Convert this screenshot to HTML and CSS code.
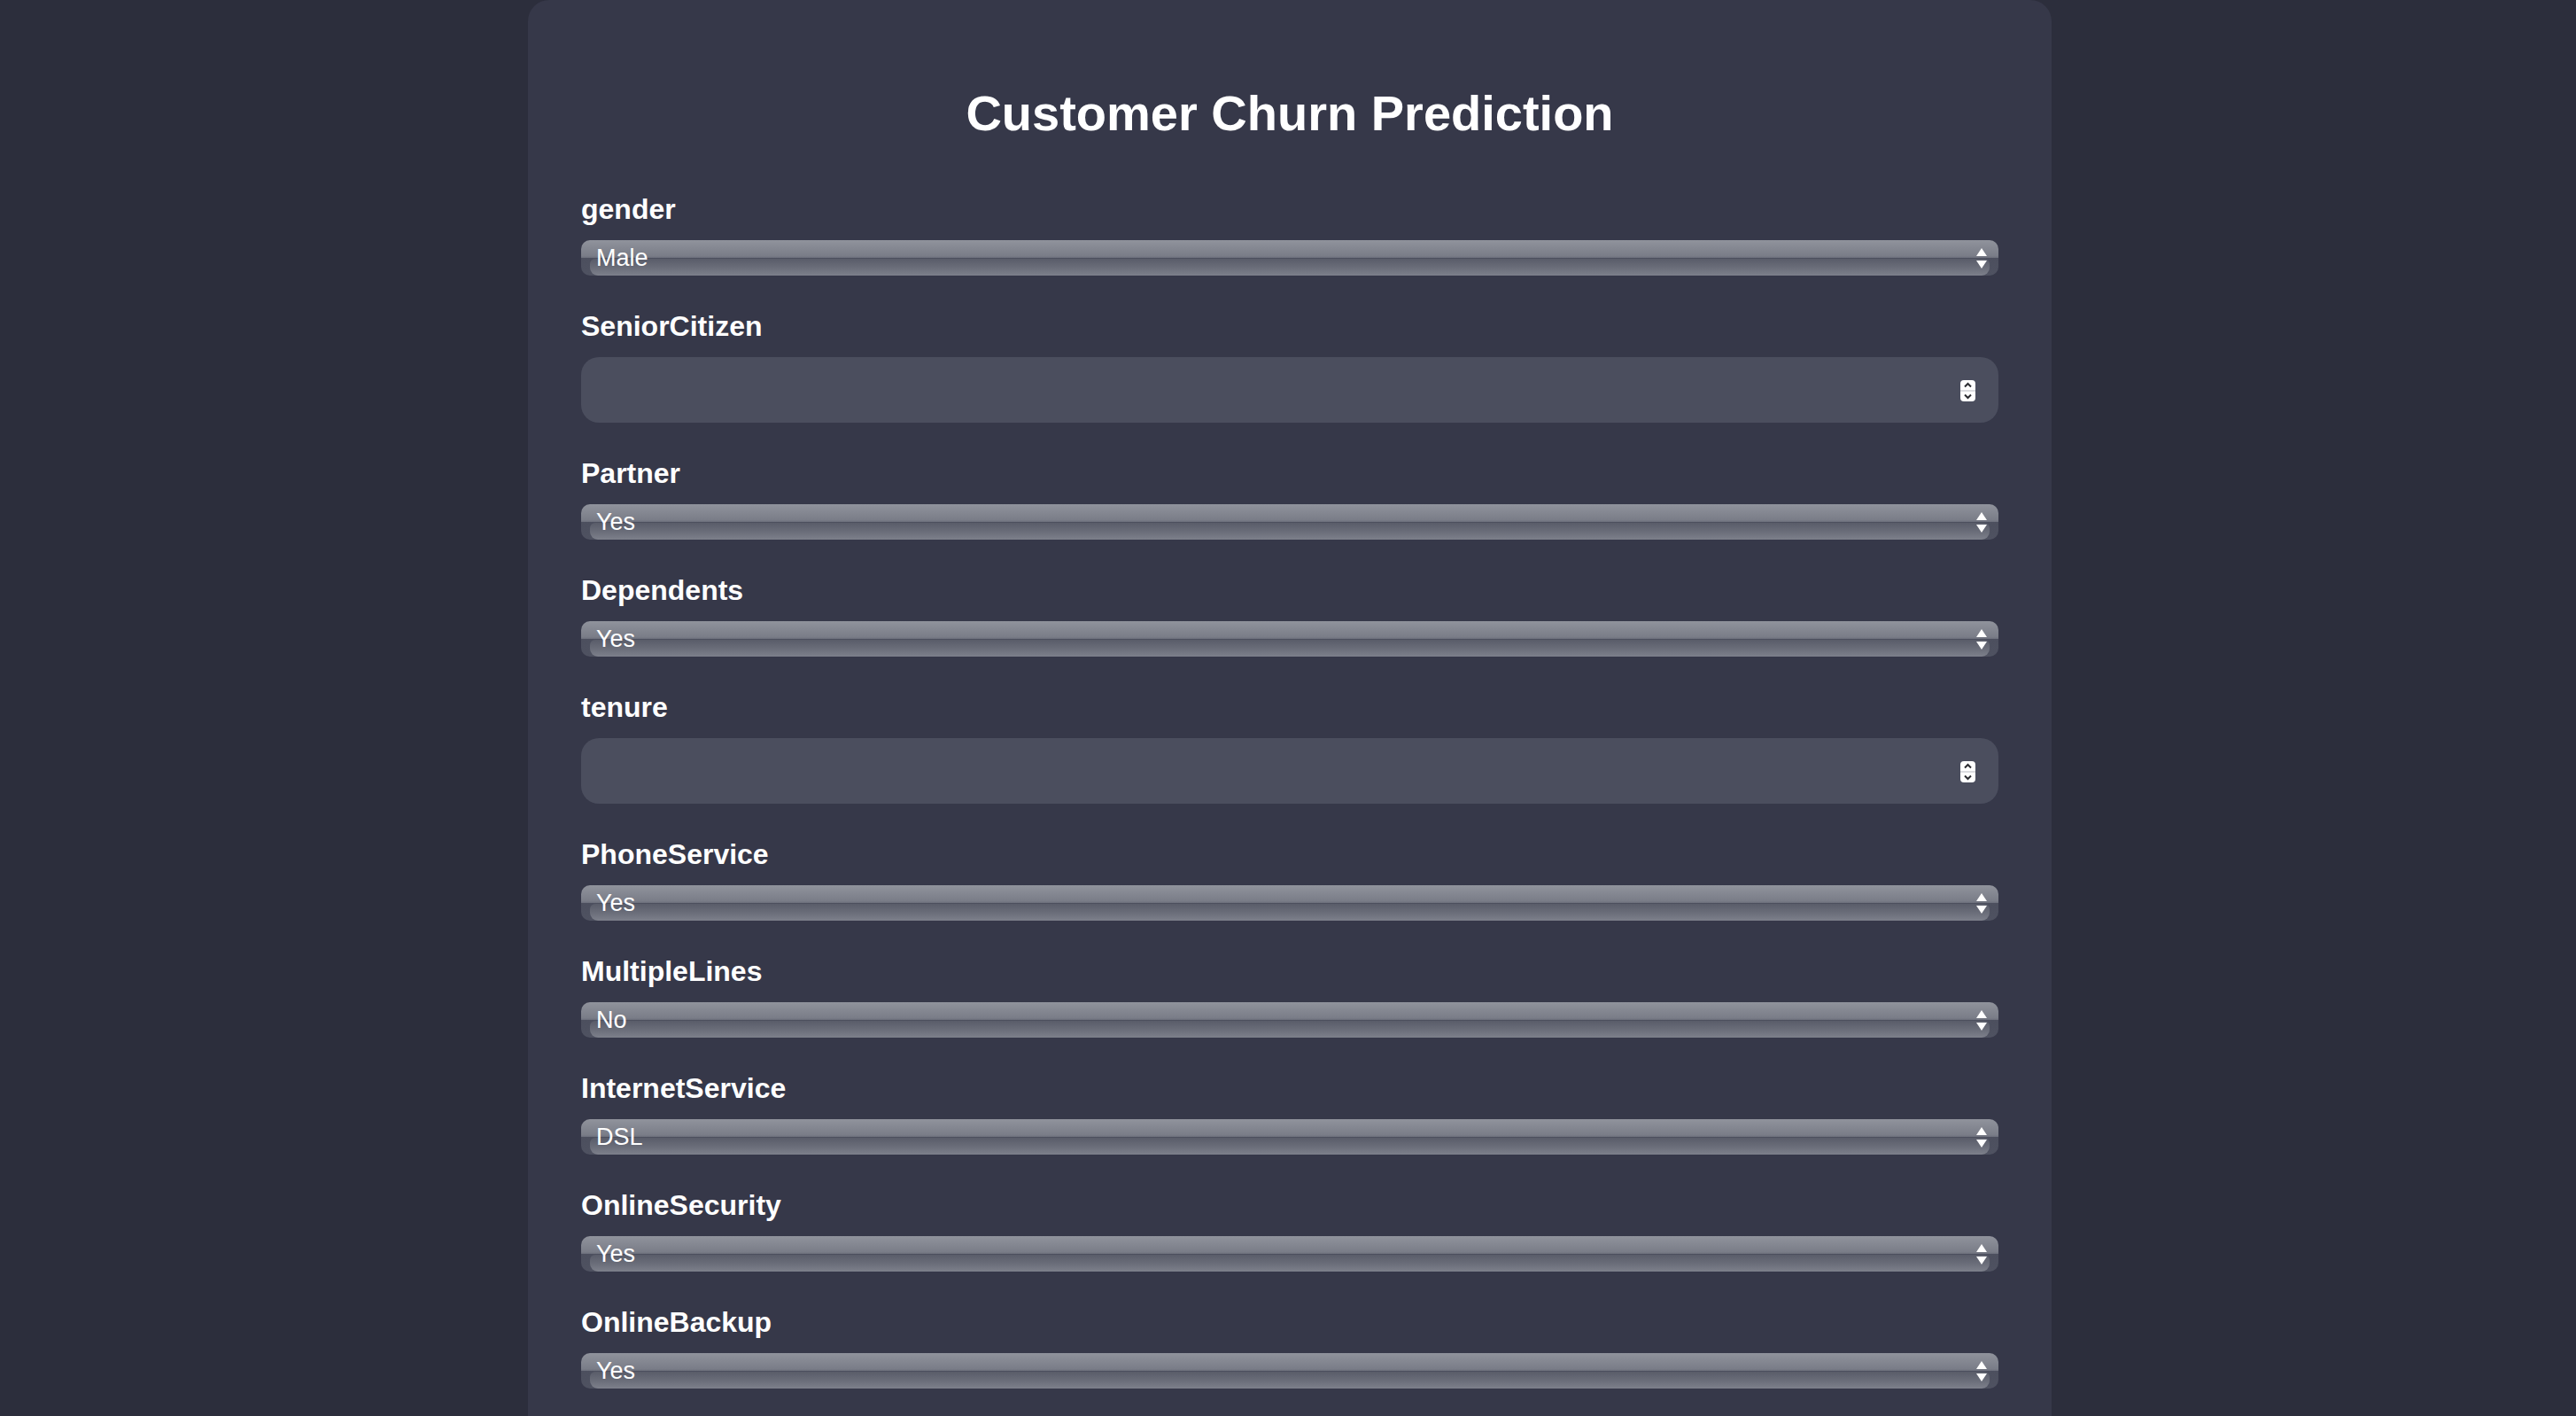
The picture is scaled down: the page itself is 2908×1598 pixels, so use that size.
FILE: index.html
```html
<!DOCTYPE html>
<html lang="en">
<head>
<meta charset="utf-8">
<title>Customer Churn Prediction</title>
<link rel="stylesheet" href="styles.css">
</head>
<body>
<main class="card">
  <h1 class="title">Customer Churn Prediction</h1>
  <form class="form">
    <div class="field">
      <label class="label" for="gender">gender</label>
      <div class="select-box">
        <select id="gender" class="select"><option>Male</option><option>Female</option></select>
        <svg class="select-arrows" width="12" height="23" viewBox="0 0 12 23"><polygon points="6,0 12,9 0,9" fill="#fff"/><polygon points="0,14 12,14 6,23" fill="#fff"/></svg>
      </div>
    </div>
    <div class="field">
      <label class="label" for="senior">SeniorCitizen</label>
      <div class="num-box">
        <input id="senior" class="num-input" type="number">
        <svg class="spinner" width="17" height="24" viewBox="0 0 17 24"><rect x="0" y="0" width="17" height="24" rx="4" fill="#fff"/><line x1="0" y1="12" x2="17" y2="12" stroke="#cfd0d6" stroke-width="1.5"/><polyline points="5,7.5 8.5,4 12,7.5" fill="none" stroke="#2a2b30" stroke-width="2"/><polyline points="5,16.5 8.5,20 12,16.5" fill="none" stroke="#2a2b30" stroke-width="2"/></svg>
      </div>
    </div>
    <div class="field">
      <label class="label" for="partner">Partner</label>
      <div class="select-box">
        <select id="partner" class="select"><option>Yes</option><option>No</option></select>
        <svg class="select-arrows" width="12" height="23" viewBox="0 0 12 23"><polygon points="6,0 12,9 0,9" fill="#fff"/><polygon points="0,14 12,14 6,23" fill="#fff"/></svg>
      </div>
    </div>
    <div class="field">
      <label class="label" for="dependents">Dependents</label>
      <div class="select-box">
        <select id="dependents" class="select"><option>Yes</option><option>No</option></select>
        <svg class="select-arrows" width="12" height="23" viewBox="0 0 12 23"><polygon points="6,0 12,9 0,9" fill="#fff"/><polygon points="0,14 12,14 6,23" fill="#fff"/></svg>
      </div>
    </div>
    <div class="field">
      <label class="label" for="tenure">tenure</label>
      <div class="num-box">
        <input id="tenure" class="num-input" type="number">
        <svg class="spinner" width="17" height="24" viewBox="0 0 17 24"><rect x="0" y="0" width="17" height="24" rx="4" fill="#fff"/><line x1="0" y1="12" x2="17" y2="12" stroke="#cfd0d6" stroke-width="1.5"/><polyline points="5,7.5 8.5,4 12,7.5" fill="none" stroke="#2a2b30" stroke-width="2"/><polyline points="5,16.5 8.5,20 12,16.5" fill="none" stroke="#2a2b30" stroke-width="2"/></svg>
      </div>
    </div>
    <div class="field">
      <label class="label" for="phone">PhoneService</label>
      <div class="select-box">
        <select id="phone" class="select"><option>Yes</option><option>No</option></select>
        <svg class="select-arrows" width="12" height="23" viewBox="0 0 12 23"><polygon points="6,0 12,9 0,9" fill="#fff"/><polygon points="0,14 12,14 6,23" fill="#fff"/></svg>
      </div>
    </div>
    <div class="field">
      <label class="label" for="lines">MultipleLines</label>
      <div class="select-box">
        <select id="lines" class="select"><option>No</option><option>Yes</option><option>No phone service</option></select>
        <svg class="select-arrows" width="12" height="23" viewBox="0 0 12 23"><polygon points="6,0 12,9 0,9" fill="#fff"/><polygon points="0,14 12,14 6,23" fill="#fff"/></svg>
      </div>
    </div>
    <div class="field">
      <label class="label" for="internet">InternetService</label>
      <div class="select-box">
        <select id="internet" class="select"><option>DSL</option><option>Fiber optic</option><option>No</option></select>
        <svg class="select-arrows" width="12" height="23" viewBox="0 0 12 23"><polygon points="6,0 12,9 0,9" fill="#fff"/><polygon points="0,14 12,14 6,23" fill="#fff"/></svg>
      </div>
    </div>
    <div class="field">
      <label class="label" for="security">OnlineSecurity</label>
      <div class="select-box">
        <select id="security" class="select"><option>Yes</option><option>No</option></select>
        <svg class="select-arrows" width="12" height="23" viewBox="0 0 12 23"><polygon points="6,0 12,9 0,9" fill="#fff"/><polygon points="0,14 12,14 6,23" fill="#fff"/></svg>
      </div>
    </div>
    <div class="field">
      <label class="label" for="backup">OnlineBackup</label>
      <div class="select-box">
        <select id="backup" class="select"><option>Yes</option><option>No</option></select>
        <svg class="select-arrows" width="12" height="23" viewBox="0 0 12 23"><polygon points="6,0 12,9 0,9" fill="#fff"/><polygon points="0,14 12,14 6,23" fill="#fff"/></svg>
      </div>
    </div>
  </form>
</main>
</body>
</html>
```

FILE: styles.css
```css
html, body {
  margin: 0;
  padding: 0;
}

body {
  background: #2c2e3c;
  font-family: "Liberation Sans", Arial, sans-serif;
  color: #ffffff;
}

.card {
  width: 1720px;
  box-sizing: border-box;
  margin: 0 0 0 calc(50% - 858px);
  padding: 60px 60px 80px;
  background: #363849;
  border-radius: 24px;
}

.title {
  margin: 36px 0 58px;
  font-size: 56px;
  line-height: 64px;
  font-weight: 700;
  text-align: center;
  color: #ffffff;
}

.form {
  display: flex;
  flex-direction: column;
  gap: 39px;
}

.field {
  display: flex;
  flex-direction: column;
}

.label {
  display: block;
  font-size: 32px;
  line-height: 37px;
  font-weight: 700;
  margin-bottom: 16px;
  color: #ffffff;
}

.select-box {
  position: relative;
  height: 40px;
  border-radius: 10px;
  background: linear-gradient(to bottom,
    #90939c 0%,
    #7a7d88 44%,
    #6d707c 50%,
    #4c4f5e 50%,
    #4f5261 100%);
}

.select-box::before {
  content: "";
  position: absolute;
  left: 10px;
  right: 10px;
  top: 52%;
  bottom: 0;
  border-radius: 6px 6px 9px 9px;
  background: linear-gradient(to bottom, #595c69 0%, #6b6e7a 55%, #7d808b 100%);
}

.select {
  position: relative;
  z-index: 1;
  display: block;
  width: 100%;
  height: 40px;
  margin: 0;
  padding: 0 40px 0 17px;
  border: 0;
  background: transparent;
  color: #ffffff;
  font-family: "Liberation Sans", Arial, sans-serif;
  font-size: 27px;
  -webkit-appearance: none;
  appearance: none;
  outline: none;
}

.select-arrows {
  position: absolute;
  z-index: 2;
  right: 13px;
  top: 9px;
}

.num-box {
  position: relative;
  height: 74px;
}

.num-input {
  display: block;
  width: 100%;
  height: 74px;
  box-sizing: border-box;
  margin: 0;
  padding: 0 56px 0 20px;
  border: 0;
  border-radius: 20px;
  background: #4b4e5e;
  color: #ffffff;
  font-family: "Liberation Sans", Arial, sans-serif;
  font-size: 27px;
  -moz-appearance: textfield;
  appearance: textfield;
  outline: none;
}

.num-input::-webkit-inner-spin-button,
.num-input::-webkit-outer-spin-button {
  -webkit-appearance: none;
  margin: 0;
}

.spinner {
  position: absolute;
  right: 26px;
  top: 26px;
}
```
